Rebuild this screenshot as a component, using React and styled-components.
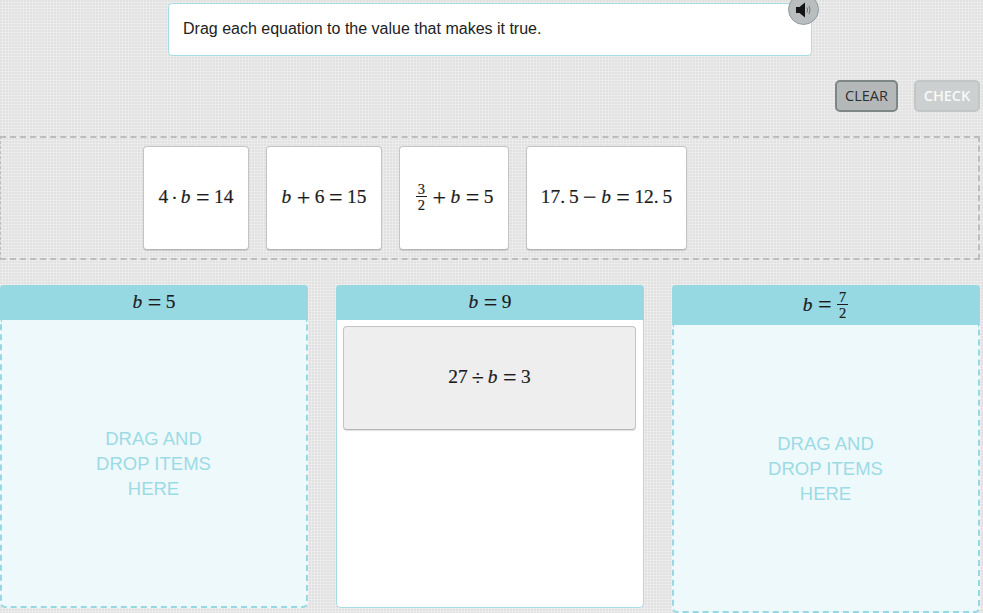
import React from "react";
import styled, { createGlobalStyle } from "styled-components";

const GlobalStyle = createGlobalStyle`
  html, body {
    margin: 0;
    padding: 0;
    height: 613px;
    overflow: hidden;
  }
  body {
    background-color: #eaeaea;
    background-image:
      radial-gradient(circle at 1px 1px, #e1e1e1 0.7px, transparent 1px),
      radial-gradient(circle at 2.5px 2.5px, #f0f0f0 0.6px, transparent 1px);
    background-size: 3px 3px;
    font-family: "Liberation Sans", Arial, sans-serif;
  }
`;

const Page = styled.div`
  width: 980px;
  padding-top: 3px;
`;

const Prompt = styled.div`
  position: relative;
  box-sizing: border-box;
  width: 644px;
  height: 53px;
  margin-left: 168px;
  padding: 0 0 2px 14px;
  display: flex;
  align-items: center;
  background: #fff;
  border: 1px solid #a9dbe3;
  border-radius: 4px;
  color: #222;
  font-size: 16px;
`;

const SpeakerButton = styled.div`
  position: absolute;
  top: -10px;
  right: -8px;
  box-sizing: border-box;
  width: 31px;
  height: 31px;
  display: flex;
  align-items: center;
  justify-content: center;
  border: 1px solid #8f9c9e;
  border-radius: 50%;
  background: #b9bdbd;
`;

const Actions = styled.div`
  display: flex;
  justify-content: flex-end;
  gap: 16px;
  margin-top: 24px;
`;

const ActionButton = styled.button`
  box-sizing: border-box;
  width: ${(p) => p.$width}px;
  height: 32px;
  padding: 0 0 2px;
  border: 2px solid ${(p) => (p.$disabled ? "#c3c6c6" : "#7f8687")};
  border-radius: 5px;
  background: ${(p) => (p.$disabled ? "#cdd0d0" : "#b4b8b8")};
  color: ${(p) => (p.$disabled ? "#f8f9f9" : "#2b2f30")};
  font-family: "Open Sans", sans-serif;
  font-size: 14.5px;
  font-weight: ${(p) => (p.$disabled ? 600 : 400)};
`;

const Tray = styled.div`
  box-sizing: border-box;
  height: 124px;
  margin-top: 24px;
  padding: 8px 0 8px 142px;
  display: flex;
  gap: 17px;
  border: 2px dashed #bdbdbd;
  border-left-width: 1px;
`;

const Card = styled.div`
  box-sizing: border-box;
  width: ${(p) => (p.$width ? `${p.$width}px` : "100%")};
  height: 104px;
  padding-bottom: 2px;
  display: flex;
  align-items: center;
  justify-content: center;
  background: ${(p) => (p.$placed ? "#eeeeee" : "#fff")};
  border: 1px solid #c4c4c4;
  border-bottom-color: #b5b5b5;
  border-radius: 4px;
  box-shadow: 0 1px 1px rgba(0, 0, 0, 0.12);
`;

const Columns = styled.div`
  display: grid;
  grid-template-columns: repeat(3, 308px);
  column-gap: 28px;
  align-items: start;
  margin-top: 25px;
`;

const Column = styled.section`
  display: flex;
  flex-direction: column;
`;

const ColumnHeader = styled.header`
  box-sizing: border-box;
  height: ${(p) => p.$height}px;
  padding-bottom: 1px;
  display: flex;
  align-items: center;
  justify-content: center;
  background: #96d9e3;
  border-radius: 4px 4px 0 0;
`;

const DropZone = styled.div`
  box-sizing: border-box;
  height: 288px;
  padding-right: 1px;
  display: flex;
  align-items: center;
  justify-content: center;
  background: #eef9fc;
  border: 2px dashed #96d9e3;
  border-top: none;
  border-radius: 0 0 5px 5px;
  color: #9cdbe4;
  font-family: "Liberation Sans", Arial, sans-serif;
  font-size: 18.5px;
  line-height: 25px;
  text-align: center;
`;

const FilledZone = styled.div`
  box-sizing: border-box;
  height: 288px;
  padding: 6px 7px 6px 6px;
  background: #fff;
  border: 1px solid #a9dbe3;
  border-top: none;
  border-radius: 0 0 5px 5px;
`;

const Math = styled.span`
  display: inline-flex;
  align-items: center;
  font-family: "Liberation Serif", "Times New Roman", serif;
  font-size: 19.4px;
  line-height: 1;
  color: #1c1c1c;
  white-space: nowrap;
  -webkit-text-stroke: 0.2px #1c1c1c;
`;

const Var = styled.i`
  font-style: italic;
  margin-right: 1px;
`;

const Op = styled.span`
  font-size: ${(p) => p.$size ?? 24}px;
  line-height: 19px;
  margin: 0 ${(p) => p.$space ?? 4.5}px;
`;

const Frac = styled.span`
  display: inline-flex;
  flex-direction: column;
  align-items: center;
  font-size: 14.5px;
  line-height: 14px;
  margin: 0 1px;
`;

const Num = styled.span`
  padding: 0 2px;
  border-bottom: 1px solid #1c1c1c;
`;

const Den = styled.span`
  padding-top: 1px;
`;

const SpeakerIcon = () => (
  <svg width="16" height="16" viewBox="0 0 16 16" aria-hidden="true">
    <path d="M0 5h3.5L9 0.5v15L3.5 11H0z" fill="#151515" />
    <path d="M11 5.5q1.2 2.5 0 5M13 4q2.2 4 0 8" fill="none" stroke="#6f7576" strokeWidth="1" />
  </svg>
);

const Fraction = ({ top, bottom }) => (
  <Frac>
    <Num>{top}</Num>
    <Den>{bottom}</Den>
  </Frac>
);

const DropHint = () => (
  <div>
    DRAG AND
    <br />
    DROP ITEMS
    <br />
    HERE
  </div>
);

export default function App() {
  return (
    <>
      <GlobalStyle />
      <Page>
        <Prompt>
          Drag each equation to the value that makes it true.
          <SpeakerButton>
            <SpeakerIcon />
          </SpeakerButton>
        </Prompt>

        <Actions>
          <ActionButton $width={63}>CLEAR</ActionButton>
          <ActionButton $width={66} $disabled>CHECK</ActionButton>
        </Actions>

        <Tray>
          <Card $width={106}>
            <Math>4<Op $size={19.4} $space={3}>·</Op><Var>b</Var><Op>=</Op>14</Math>
          </Card>
          <Card $width={116}>
            <Math><Var>b</Var><Op>+</Op>6<Op>=</Op>15</Math>
          </Card>
          <Card $width={110}>
            <Math><Fraction top="3" bottom="2" /><Op>+</Op><Var>b</Var><Op>=</Op>5</Math>
          </Card>
          <Card $width={161}>
            <Math>17.&thinsp;5<Op>−</Op><Var>b</Var><Op>=</Op>12.&thinsp;5</Math>
          </Card>
        </Tray>

        <Columns>
          <Column>
            <ColumnHeader $height={35}>
              <Math><Var>b</Var><Op>=</Op>5</Math>
            </ColumnHeader>
            <DropZone>
              <DropHint />
            </DropZone>
          </Column>

          <Column>
            <ColumnHeader $height={35}>
              <Math><Var>b</Var><Op>=</Op>9</Math>
            </ColumnHeader>
            <FilledZone>
              <Card $placed>
                <Math>27<Op $size={22} $space={4}>÷</Op><Var>b</Var><Op>=</Op>3</Math>
              </Card>
            </FilledZone>
          </Column>

          <Column>
            <ColumnHeader $height={40}>
              <Math><Var>b</Var><Op>=</Op><Fraction top="7" bottom="2" /></Math>
            </ColumnHeader>
            <DropZone>
              <DropHint />
            </DropZone>
          </Column>
        </Columns>
      </Page>
    </>
  );
}
